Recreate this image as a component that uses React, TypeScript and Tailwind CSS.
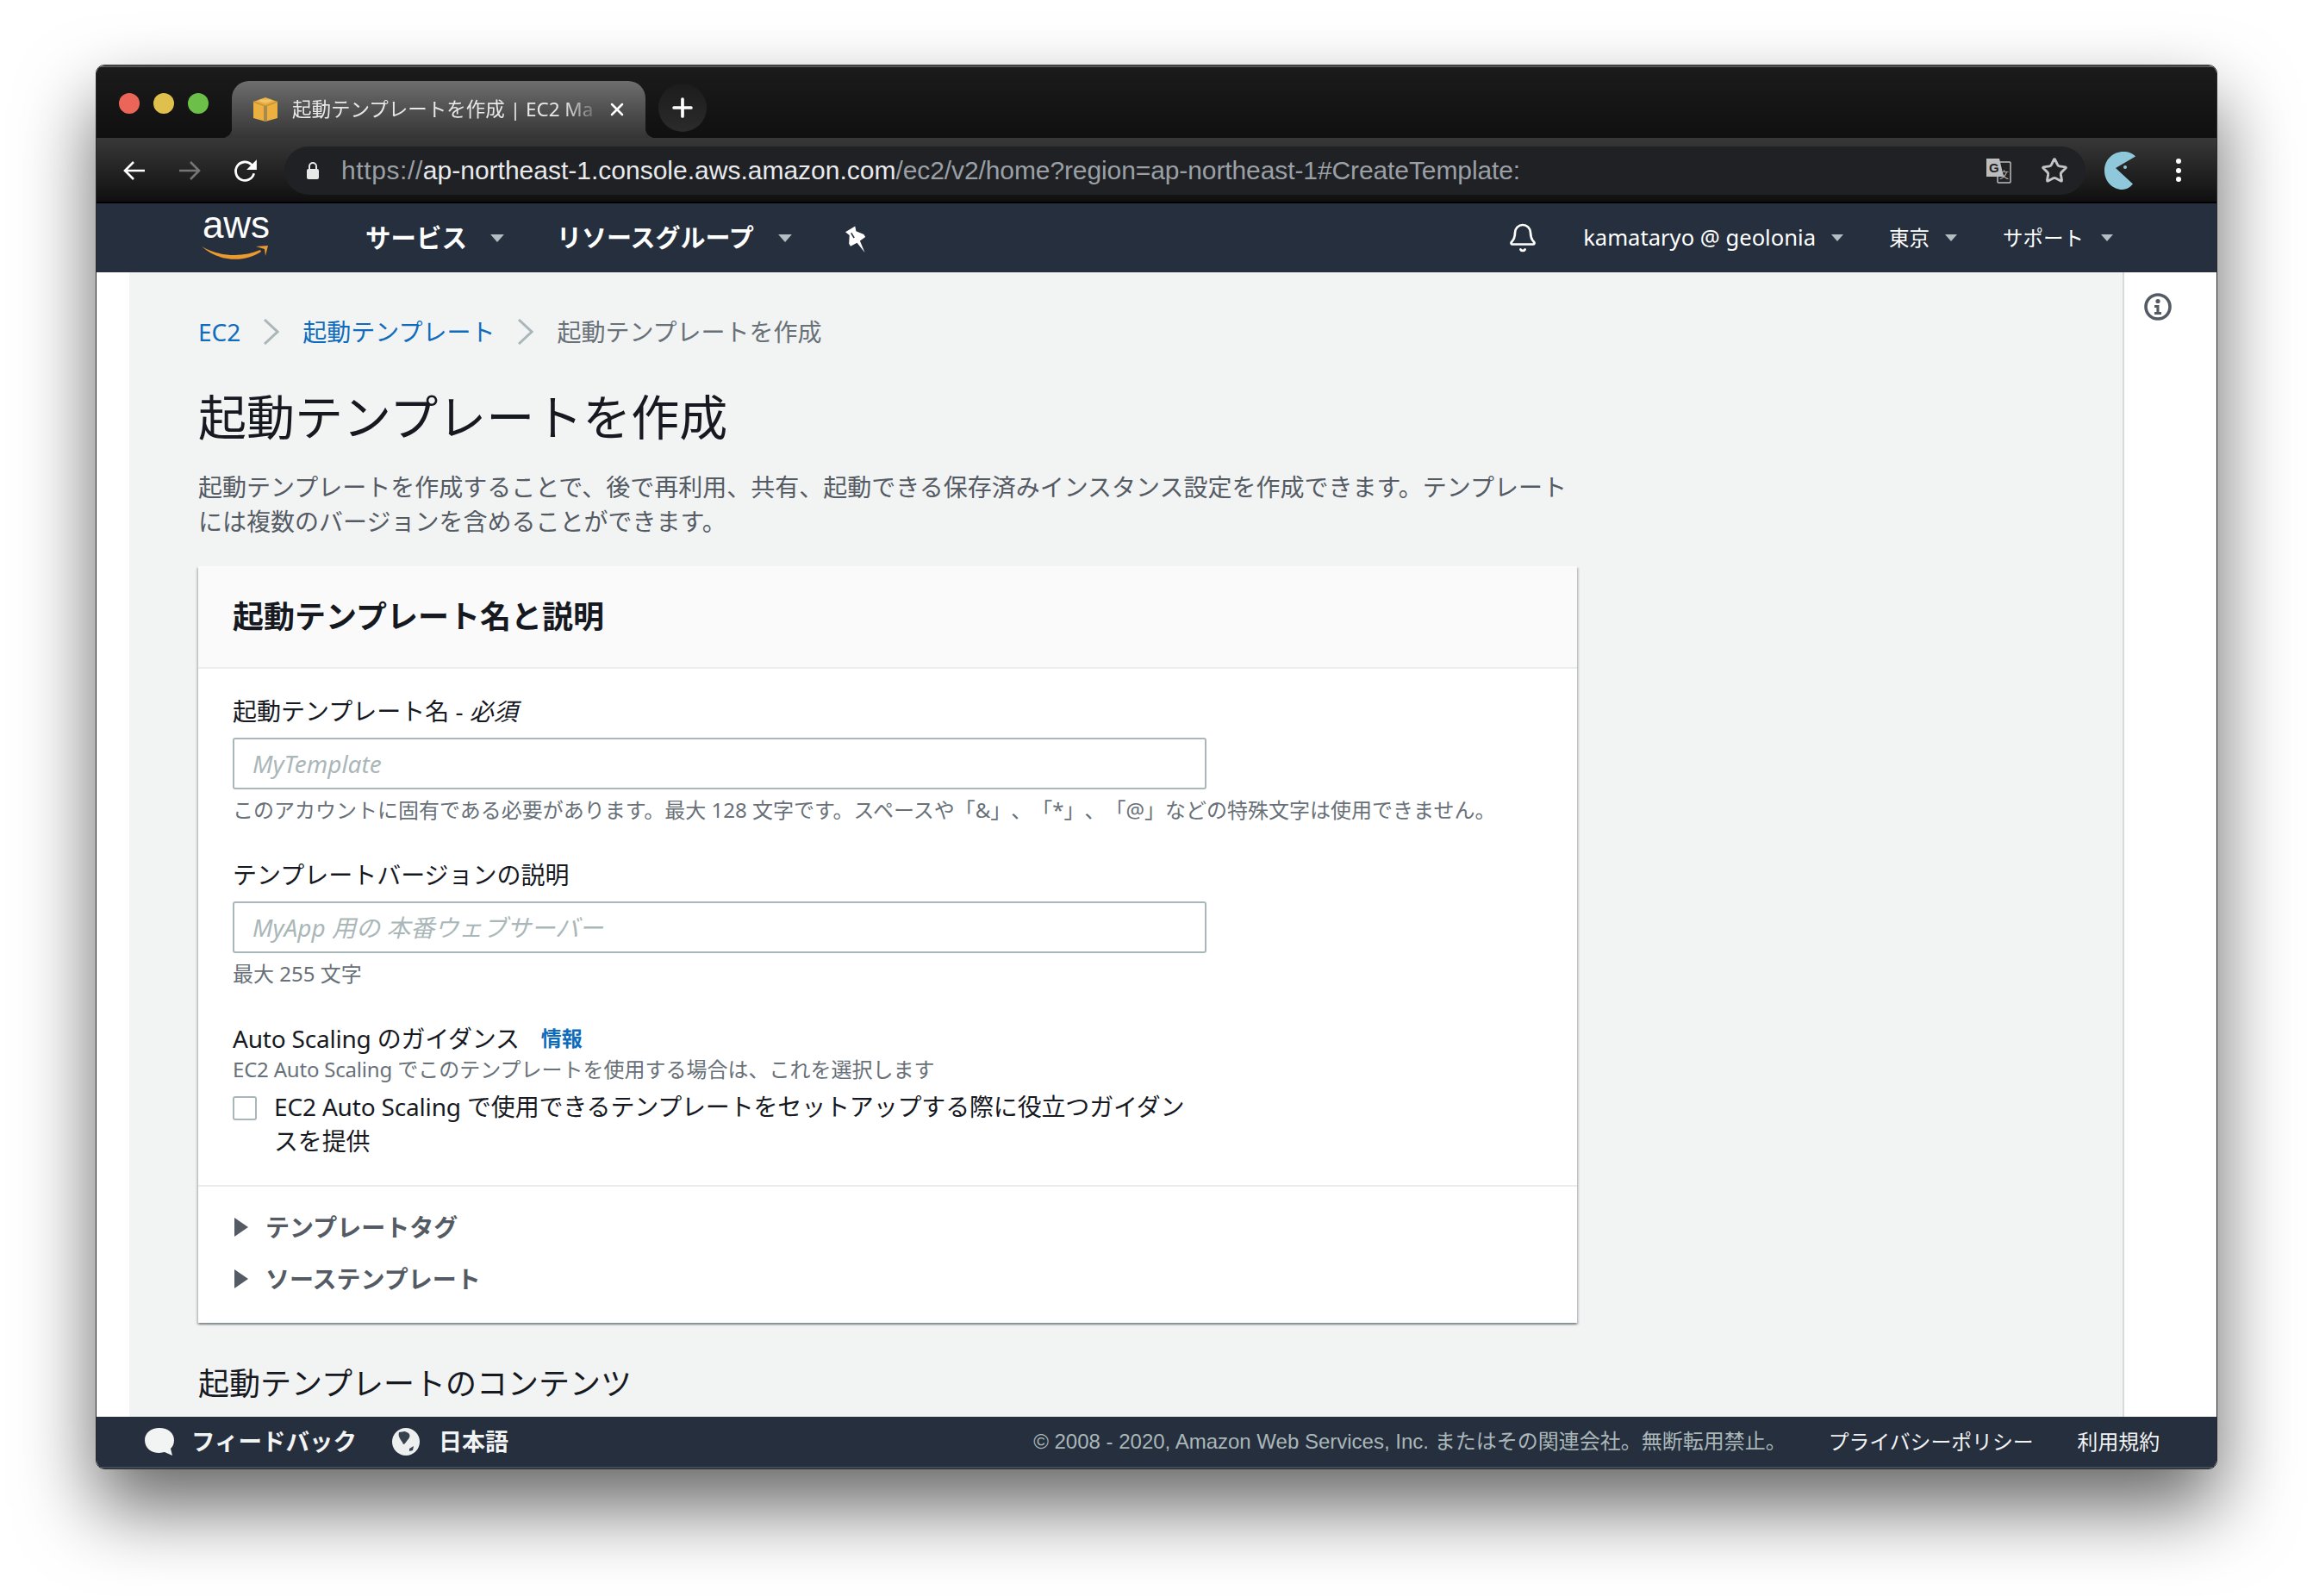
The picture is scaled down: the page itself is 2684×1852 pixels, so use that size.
import { Bell, Plus, Star, X } from "lucide-react"

const jp = "[font-family:'Noto_Sans','Noto_Sans_CJK_JP',sans-serif] [text-spacing-trim:space-all]"

function Caret({ className = "" }: { className?: string }) {
  return (
    <svg viewBox="0 0 14 8" className={`shrink-0 ${className}`}>
      <path d="M0 0h14L7 8z" fill="#b4bcc4" />
    </svg>
  )
}

function Crumb() {
  return (
    <svg viewBox="0 0 18 30" className="w-[18px] h-[30px] mx-[27px] shrink-0" fill="none">
      <path d="M1 1l15 14L1 29" stroke="#aab7b8" strokeWidth="3" />
    </svg>
  )
}

function TrafficLights() {
  return (
    <div className="flex gap-[16px] ml-[26px] mb-[28px]">
      <span className="w-[24px] h-[24px] rounded-full bg-[#ec6559]" />
      <span className="w-[24px] h-[24px] rounded-full bg-[#e0c04c]" />
      <span className="w-[24px] h-[24px] rounded-full bg-[#6cc04a]" />
    </div>
  )
}

function BoxIcon() {
  return (
    <svg viewBox="0 0 30 30" className="w-[30px] h-[30px] shrink-0">
      <path d="M15 1 29 6v19l-14 4-14-4V6z" fill="#ebb040" />
      <path d="M13 10h4v19h-4z" fill="#a88a4c" />
      <path d="M1 6l14 5 14-5" fill="none" stroke="#c4933a" strokeWidth="1.5" />
      <path d="M9 3.5l12 0 2 1.5-8 2.5-8-2.5z" fill="#f0c56d" />
    </svg>
  )
}

function TabStrip() {
  return (
    <div className="h-[84px] shrink-0 flex items-end bg-gradient-to-b from-[#1b1b1b] to-[#101010] border-t-2 border-[#555555]">
      <TrafficLights />
      <div className="relative ml-[27px] w-[480px] h-[66px] rounded-t-[20px] bg-gradient-to-b from-[#6e6e6e] to-[#353535] flex items-center pl-[24px] pr-[21px]">
        <span className="absolute left-[-12px] bottom-0 w-[12px] h-[12px] bg-[radial-gradient(circle_at_0_0,transparent_12px,#353535_12.5px)]" />
        <span className="absolute right-[-12px] bottom-0 w-[12px] h-[12px] bg-[radial-gradient(circle_at_100%_0,transparent_12px,#353535_12.5px)]" />
        <BoxIcon />
        <span className={`${jp} ml-[16px] whitespace-nowrap text-[22.5px] leading-[30px] text-[#e8e8e8] [mask-image:linear-gradient(to_right,black_90%,rgba(0,0,0,0.25))]`}>
          起動テンプレートを作成 | EC2 Ma
        </span>
        <X className="w-[24px] h-[24px] ml-auto text-white shrink-0" strokeWidth={2.5} />
      </div>
      <div className="ml-[15px] mb-[7px] w-[56px] h-[56px] rounded-full bg-gradient-to-b from-[#1c1c1c] to-[#2b2b2b] flex items-center justify-center">
        <Plus className="w-[34px] h-[34px] text-white" strokeWidth={2.6} />
      </div>
    </div>
  )
}

function Toolbar() {
  return (
    <div className="h-[76px] shrink-0 bg-gradient-to-b from-[#383838] via-[#1c1c1c] via-70% to-[#0f0f0f] border-b-2 border-black flex items-start pt-[10px]">
      <div className="w-[218px] h-[56px] flex items-center shrink-0 pl-[30px]">
        <svg viewBox="0 0 28 28" className="w-[28px] h-[28px]" fill="none" stroke="white" strokeWidth="2.6">
          <path d="M26 14H3M13 4 3 14l10 10" />
        </svg>
        <svg viewBox="0 0 28 28" className="w-[28px] h-[28px] ml-[36px]" fill="none" stroke="#767676" strokeWidth="2.6">
          <path d="M2 14h23M15 4l10 10-10 10" />
        </svg>
        <svg viewBox="0 0 28 28" className="w-[30px] h-[30px] ml-[36px]" fill="none">
          <path d="M23 17a10 10 0 1 1-2.6-9.4L24 11" stroke="white" strokeWidth="2.6" />
          <path d="M26 2v11H15z" fill="white" />
        </svg>
      </div>
      <div className="w-[2090px] h-[56px] rounded-full bg-[#202124] flex items-center pl-[25px] pr-[20px]">
        <svg viewBox="0 0 16 22" className="w-[16px] h-[22px] shrink-0">
          <path d="M4 9V6a4 4 0 0 1 8 0v3" fill="none" stroke="#e8e8e8" strokeWidth="2" />
          <rect x="1" y="9" width="14" height="12" rx="2" fill="#e8e8e8" />
        </svg>
        <span className="ml-[25px] [font-family:'Liberation_Sans',sans-serif] text-[30px] leading-[40px] text-[#9aa0a6] whitespace-nowrap">
          <span className="tracking-[0.6px]">https://</span>
          <span className="text-[#e8eaed]">ap-northeast-1.console.aws.amazon.com</span>
          <span className="tracking-[-0.1px]">/ec2/v2/home?region=ap-northeast-1#CreateTemplate:</span>
        </span>
        <svg viewBox="0 0 30 30" className="w-[30px] h-[30px] ml-auto shrink-0">
          <rect x="14" y="5" width="15" height="24" rx="1" fill="#202124" stroke="#bdbdbd" strokeWidth="1.5" />
          <path d="M1 1h15l5 21H1z" fill="#bdbdbd" />
          <text x="4" y="17" fontSize="15" fontWeight="700" fill="#202124" fontFamily="Liberation Sans">G</text>
          <text x="16" y="24" fontSize="11" fill="#bdbdbd" fontFamily="Noto Sans CJK JP">文</text>
        </svg>
        <Star className="w-[32px] h-[32px] ml-[34px] text-[#c4c4c4]" strokeWidth={2.2} />
      </div>
      <svg viewBox="0 0 36 44" className="w-[36px] h-[44px] ml-[22px] mt-[6px] shrink-0">
        <path d="M36 5.5 13 19l20 18.5C29 42 25 44 21 44 9 44 0 34 0 22 0 9 10 0 22 0c6 0 11 2 14 5.5z" fill="#8ec8da" />
        <circle cx="24" cy="18" r="2" fill="#8ec8da" />
      </svg>
      <div className="ml-[47px] mt-[14px] flex flex-col gap-[4.5px]">
        <span className="w-[6px] h-[6px] rounded-full bg-white" />
        <span className="w-[6px] h-[6px] rounded-full bg-white" />
        <span className="w-[6px] h-[6px] rounded-full bg-white" />
      </div>
    </div>
  )
}

function AwsNav() {
  return (
    <nav className={`${jp} h-[80px] bg-[#252f3e] flex items-center text-white pl-[122px] shrink-0`}>
      <div className="relative w-[80px] h-[56px] mb-[4px] shrink-0">
        <span className="block mt-[-3px] [font-family:'Liberation_Sans',sans-serif] text-[44px] leading-[36px] text-center">aws</span>
        <svg viewBox="0 0 80 18" className="absolute left-0 top-[38px] w-[80px] h-[18px]">
          <path d="M0 2c20 12 48 13 68 4l1 2C50 21 20 20 0 2z" fill="#ec9a2d" />
          <path d="M63 2l14-1-3 12-1-8z" fill="#ec9a2d" />
        </svg>
      </div>
      <span className="ml-[110px] text-[29.5px] font-bold leading-[40px] whitespace-nowrap">サービス</span>
      <Caret className="ml-[27px] w-[16px] h-[9px]" />
      <span className="ml-[61px] text-[29px] font-bold leading-[40px] whitespace-nowrap">リソースグループ</span>
      <Caret className="ml-[28px] w-[16px] h-[9px]" />
      <svg viewBox="15 8 30 32" className="ml-[54px] w-[34px] h-[36px] shrink-0">
        <path d="M22 18 32 12l1 5 8 3.4 1.6 2.6L37 27l5 12-8-10-6.7 3.6L25.7 30l.5-8.7z" fill="white" />
        <path d="M28 19l3 5" stroke="#252f3e" strokeWidth="1.4" />
      </svg>
      <Bell className="ml-auto w-[36px] h-[36px] text-white" strokeWidth={1.8} />
      <span className="ml-[52px] text-[25.6px] leading-[40px] whitespace-nowrap">kamataryo @ geolonia</span>
      <Caret className="ml-[18px] w-[14px] h-[8px]" />
      <span className="ml-[53px] text-[23.5px] leading-[40px] whitespace-nowrap">東京</span>
      <Caret className="ml-[18px] w-[14px] h-[8px]" />
      <span className="ml-[53px] text-[23.5px] leading-[40px] whitespace-nowrap">サポート</span>
      <Caret className="ml-[20px] mr-[120px] w-[14px] h-[8px]" />
    </nav>
  )
}

function Breadcrumbs() {
  return (
    <div className="flex items-center text-[28px] leading-[40px] text-[#0f6cbd]">
      <span>EC2</span>
      <Crumb />
      <span>起動テンプレート</span>
      <Crumb />
      <span className="text-[#687078]">起動テンプレートを作成</span>
    </div>
  )
}

function TextField({ placeholder }: { placeholder: string }) {
  return (
    <input
      readOnly
      placeholder={placeholder}
      className={`${jp} block w-[1130px] h-[60px] mt-[11px] px-[21px] rounded-[3px] bg-white border-2 border-[#aab7b8] text-[28px] italic placeholder:text-[#aab7b8] outline-none`}
    />
  )
}

function Disclosure({ title }: { title: string }) {
  return (
    <div className="flex items-center h-[40px] text-[28px] font-bold text-[#545b64]">
      <svg viewBox="0 0 16 22" className="w-[16px] h-[22px] ml-[2px]">
        <path d="M0 0l16 11L0 22z" fill="#545b64" />
      </svg>
      <span className="ml-[20px]">{title}</span>
    </div>
  )
}

function TemplateCard() {
  return (
    <section className="w-[1600px] mt-[32px] bg-white shadow-[0_2px_2px_rgba(0,28,36,0.3),2px_2px_2px_rgba(0,28,36,0.15),-2px_2px_2px_rgba(0,28,36,0.15)]">
      <header className="h-[119px] flex items-center px-[40px] bg-[#fafafa] border-b-2 border-[#eaeded]">
        <h2 className="text-[36px] font-bold leading-[50px] text-[#16191f]">起動テンプレート名と説明</h2>
      </header>
      <div className="pt-[29px] pl-[40px] pr-[40px] pb-[31px]">
        <label className="block text-[28px] leading-[40px] text-[#16191f]">
          起動テンプレート名 - <i>必須</i>
        </label>
        <TextField placeholder="MyTemplate" />
        <p className="mt-[8px] text-[24px] leading-[32px] text-[#687078] whitespace-nowrap">
          このアカウントに固有である必要があります。最大 128 文字です。スペースや「&」、「*」、「@」などの特殊文字は使用できません。
        </p>
        <label className="block mt-[39px] text-[28px] leading-[40px] text-[#16191f]">テンプレートバージョンの説明</label>
        <TextField placeholder="MyApp 用の 本番ウェブサーバー" />
        <p className="mt-[8px] text-[24px] leading-[32px] text-[#687078]">最大 255 文字</p>
        <div className="mt-[39px] flex items-center text-[28px] leading-[40px] text-[#16191f]">
          <span className="tracking-[-0.2px]">Auto Scaling のガイダンス</span>
          <a className="ml-[25px] text-[24px] font-bold text-[#0f6cbd]">情報</a>
        </div>
        <p className="text-[24px] leading-[32px] text-[#687078]">
          <span className="tracking-[-0.2px]">EC2 Auto Scaling</span> でこのテンプレートを使用する場合は、これを選択します
        </p>
        <div className="mt-[7px] flex items-start">
          <span className="w-[28px] h-[28px] mt-[8px] shrink-0 rounded-[3px] bg-white border-2 border-[#aab7b8]" />
          <p className="ml-[20px] w-[1075px] text-[28px] leading-[40px] tracking-[-0.17px] text-[#16191f]">
            EC2 Auto Scaling で使用できるテンプレートをセットアップする際に役立つガイダンスを提供
          </p>
        </div>
      </div>
      <div className="border-t-2 border-[#eaeded] pt-[27px] pb-[31px] px-[40px] flex flex-col gap-[20px]">
        <Disclosure title="テンプレートタグ" />
        <Disclosure title="ソーステンプレート" />
      </div>
    </section>
  )
}

function Content() {
  return (
    <div className={`${jp} flex-1 min-h-0 flex overflow-hidden bg-white`}>
      <div className="w-[38px] shrink-0" />
      <main className="flex-1 bg-[#f2f3f3] pt-[49px] pl-[80px]">
        <Breadcrumbs />
        <h1 className="mt-[42px] text-[56px] leading-[72px] text-[#16191f]">起動テンプレートを作成</h1>
        <p className="mt-[26px] w-[1600px] text-[28px] leading-[40px] text-[#545b64]">
          起動テンプレートを作成することで、後で再利用、共有、起動できる保存済みインスタンス設定を作成できます。テンプレートには複数のバージョンを含めることができます。
        </p>
        <TemplateCard />
        <h2 className="mt-[46px] text-[36px] leading-[50px] text-[#16191f]">起動テンプレートのコンテンツ</h2>
      </main>
      <aside className="w-[109px] shrink-0 border-l-2 border-[#d5dbdb] pl-[23px] pt-[24px]">
        <svg viewBox="0 0 32 32" className="w-[32px] h-[32px]" fill="none">
          <circle cx="16" cy="16" r="14" stroke="#545b64" strokeWidth="3.6" />
          <circle cx="16" cy="9.5" r="2.6" fill="#545b64" />
          <path d="M12 14h5.5v8H20v3h-8v-3h2.4v-5H12z" fill="#545b64" />
        </svg>
      </aside>
    </div>
  )
}

function Footer() {
  return (
    <footer className={`${jp} h-[60px] shrink-0 bg-[#252f3e] flex items-center pl-[56px] pr-[66px] border-b-2 border-[#414b59]`}>
      <svg viewBox="0 0 34 32" className="w-[34px] h-[32px] shrink-0">
        <path d="M17 0c10 0 17 6 17 14 0 5-2 8-4 10l2 8-9-4c-2 0-4 1-6 1C7 29 0 23 0 14 0 6 7 0 17 0z" fill="#f2f3f3" />
      </svg>
      <span className="ml-[20px] text-[27.5px] font-bold leading-[40px] text-[#f2f3f3] whitespace-nowrap">フィードバック</span>
      <svg viewBox="0 0 32 32" className="w-[32px] h-[32px] ml-[41px] shrink-0">
        <circle cx="16" cy="16" r="16" fill="#eef0f0" />
        <path d="M8 5c4 0 6-2 9 0 5 2 4 6 1 9-2 2-3 5-5 5-1-4-7-8-5-14zM20 24l5-3-1 5-4 1z" fill="#37424f" />
      </svg>
      <span className="ml-[22px] text-[27px] font-bold leading-[40px] text-[#f2f3f3] whitespace-nowrap">日本語</span>
      <span className="ml-auto [font-family:'Liberation_Sans','Noto_Sans_CJK_JP',sans-serif] text-[24px] leading-[36px] text-[#aab7b8] whitespace-nowrap">
        © 2008 - 2020, Amazon Web Services, Inc. またはその関連会社。無断転用禁止。
      </span>
      <span className="ml-[49px] text-[23.85px] leading-[36px] text-[#f2f3f3] whitespace-nowrap">プライバシーポリシー</span>
      <span className="ml-[51px] text-[23.85px] leading-[36px] text-[#f2f3f3] whitespace-nowrap">利用規約</span>
    </footer>
  )
}

export default function App() {
  return (
    <div className="w-[2684px] h-[1852px] overflow-hidden bg-white pt-[75px] pl-[111px]">
      <div className="w-[2462px] h-[1630px] flex flex-col rounded-[10px] overflow-hidden border border-[#2a2a2a] shadow-[0_44px_88px_rgba(0,0,0,0.6)]">
        <TabStrip />
        <Toolbar />
        <AwsNav />
        <Content />
        <Footer />
      </div>
    </div>
  )
}
